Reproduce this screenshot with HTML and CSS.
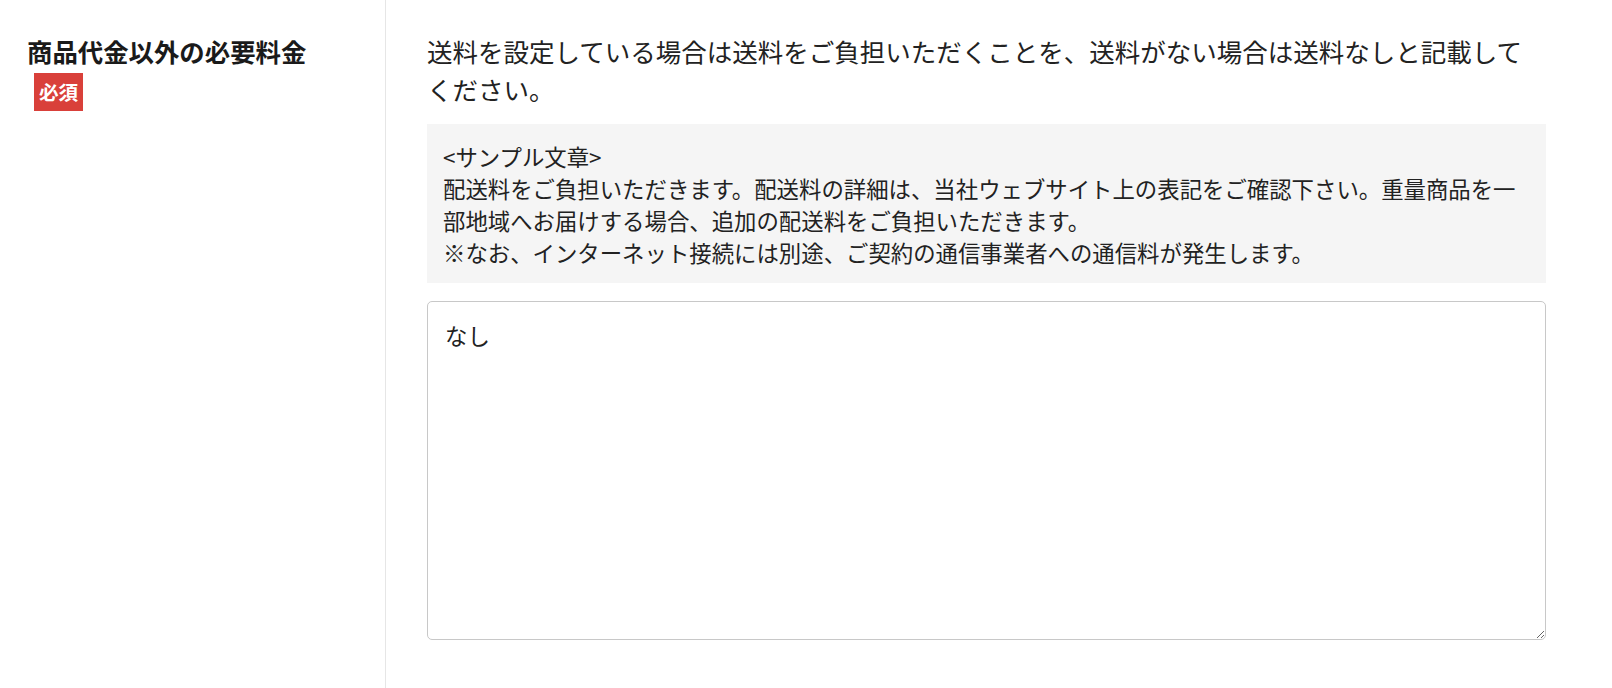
FILE: index.html
```html
<!DOCTYPE html>
<html lang="ja">
<head>
    <meta charset="UTF-8">
    <meta name="viewport" content="width=device-width, initial-scale=1.0">
    <title>商品代金以外の必要料金</title>
    <link rel="stylesheet" href="styles.css">
</head>
<body>
    <div class="form-row">
        <div class="form-label">
            <h3 class="label-title">商品代金以外の必要料金</h3>
            <span class="badge">必須</span>
        </div>

        <div class="form-field">
            <p class="field-help">送料を設定している場合は送料をご負担いただくことを、送料がない場合は送料なしと記載してください。</p>

            <div class="sample">
                &lt;サンプル文章&gt;<br>
                配送料をご負担いただきます。配送料の詳細は、当社ウェブサイト上の表記をご確認下さい。重量商品を一部地域へお届けする場合、追加の配送料をご負担いただきます。<br>
                ※なお、インターネット接続には別途、ご契約の通信事業者への通信料が発生します。
            </div>

            <textarea class="field-input" rows="10">なし</textarea>
        </div>
    </div>
</body>
</html>
```

FILE: styles.css
```css
body {
    margin: 0;
    font-family: "Noto Sans CJK JP", "Noto Sans", sans-serif;
    color: #222;
    background-color: #fff;
}

.form-row {
    display: flex;
    min-height: 688px;
}

.form-label {
    width: 358px;
    flex-shrink: 0;
    padding: 32px 0 0 27px;
    border-right: 1px solid #e6e6e6;
}

.label-title {
    margin: 0;
    font-size: 25.4px;
    line-height: 38px;
    font-weight: bold;
    color: #1a1a1a;
}

.badge {
    display: inline-block;
    margin: 3px 0 0 7px;
    padding: 0 5px;
    height: 38px;
    line-height: 38px;
    font-size: 19.6px;
    font-weight: bold;
    color: #fff;
    background-color: #d9403a;
}

.form-field {
    flex: 1;
    padding: 32px 66px 0 41px;
}

.field-help {
    margin: 0;
    font-size: 25.5px;
    line-height: 37.8px;
}

.sample {
    margin-top: 16px;
    padding: 16px 16px 15px;
    background-color: #f5f5f5;
    font-size: 22.4px;
    line-height: 32px;
}

.field-input {
    display: block;
    box-sizing: border-box;
    width: 100%;
    height: 339px;
    margin-top: 18px;
    padding: 17px 17px;
    border: 1px solid #c8c8c8;
    border-radius: 5px;
    font-family: inherit;
    font-size: 22.4px;
    line-height: 33.6px;
    color: #222;
    resize: vertical;
}
```
